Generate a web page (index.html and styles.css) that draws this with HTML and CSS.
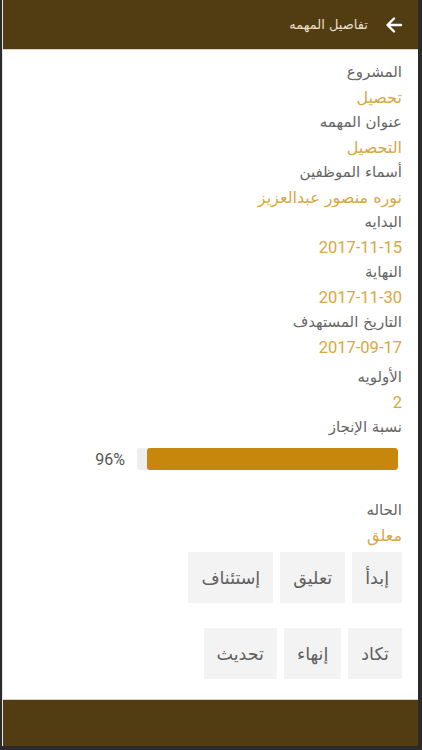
FILE: index.html
```html
<!DOCTYPE html>
<html lang="ar" dir="rtl">
<head>
<meta charset="utf-8">
<link rel="stylesheet" href="styles.css">
</head>
<body>
<div class="frame">
  <header class="topbar">
    <svg class="back" viewBox="0 0 20 20" width="20" height="20"><path d="M17 10H4M10 3.5L3.5 10L10 16.5" fill="none" stroke="#fff" stroke-width="2.4" stroke-linecap="round" stroke-linejoin="round"/></svg>
    <span class="title">تفاصيل المهمه</span>
  </header>
  <main class="content">
    <div class="label">المشروع</div>
    <div class="value">تحصيل</div>
    <div class="label">عنوان المهمه</div>
    <div class="value">التحصيل</div>
    <div class="label">أسماء الموظفين</div>
    <div class="value">نوره منصور عبدالعزيز</div>
    <div class="label">البدايه</div>
    <div class="value num">2017-11-15</div>
    <div class="label">النهاية</div>
    <div class="value num">2017-11-30</div>
    <div class="label">التاريخ المستهدف</div>
    <div class="value num">2017-09-17</div>
    <div class="label priority">الأولويه</div>
    <div class="value num">2</div>
    <div class="label">نسبة الإنجاز</div>
    <div class="progress-row">
      <div class="track"><div class="fill" style="width:96%"></div></div>
      <span class="pct">96%</span>
    </div>
    <div class="label state">الحاله</div>
    <div class="value">معلق</div>
    <div class="buttons row1">
      <button class="btn">إبدأ</button>
      <button class="btn">تعليق</button>
      <button class="btn">إستئناف</button>
    </div>
    <div class="buttons row2">
      <button class="btn">تكاد</button>
      <button class="btn">إنهاء</button>
      <button class="btn">تحديث</button>
    </div>
  </main>
  <footer class="bottombar"></footer>
</div>
</body>
</html>
```
FILE: styles.css
```css
html, body {
  margin: 0;
  padding: 0;
  background: #2b2b2b;
  height: 750px;
  overflow: hidden;
}
body {
  font-family: "DejaVu Sans", "Noto Sans", sans-serif;
}
.frame {
  margin: 0 4px 0 2px;
  height: 746px;
  display: flex;
  flex-direction: column;
  background: #fff;
  border-left: 1px solid #e6e6e6;
}
.topbar {
  height: 49px;
  flex: none;
  background: #523d13;
  display: flex;
  align-items: center;
  padding-right: 14px;
  gap: 16px;
  border-bottom: 1px solid #d8d2c4;
}
.back { flex: none; }
.title {
  color: #eadfc8;
  font-size: 13px;
}
.content {
  flex: 1;
  padding: 10px 16px 0 0;
  display: flex;
  flex-direction: column;
  align-items: flex-start;
}
.label {
  color: #666;
  font-size: 15px;
  line-height: 25px;
}
.priority { margin-top: 5px; }
.value {
  color: #d8a743;
  font-size: 16px;
  line-height: 25px;
}
.num {
  font-family: Roboto, "DejaVu Sans", sans-serif;
  font-size: 16.5px;
}
.progress-row {
  display: flex;
  align-items: center;
  gap: 12px;
  margin: 8px 4px 28px 0;
}
.track {
  width: 261px;
  height: 22px;
  background: #eeeeee;
  border-radius: 3px;
  overflow: hidden;
  display: flex;
}
.fill {
  background: #c7860c;
  height: 100%;
  border-radius: 3px;
}
.pct {
  font-family: Roboto, sans-serif;
  font-size: 16px;
  color: #555;
}
.buttons {
  display: flex;
  gap: 7px;
}
.row1 { margin-top: 4px; }
.row2 { margin-top: 25px; }
.btn {
  font-family: "DejaVu Sans", "Noto Sans", sans-serif;
  font-size: 17.5px;
  color: #606060;
  background: #f3f3f3;
  border: none;
  height: 51px;
  padding: 0 13px;
}
.bottombar {
  height: 46px;
  flex: none;
  background: #523d13;
  border-top: 1px solid #d8d2c4;
}
```
